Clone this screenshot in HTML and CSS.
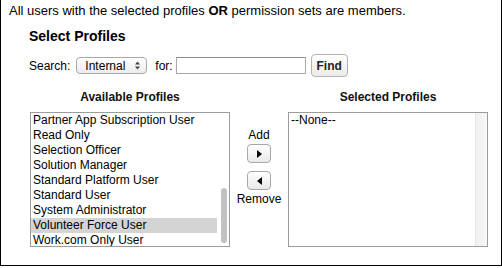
FILE: index.html
```html
<!DOCTYPE html>
<html lang="en">
<head>
    <meta charset="UTF-8">
    <title>Select Profiles</title>
    <link rel="stylesheet" href="styles.css">
</head>
<body>
    <div class="panel">
        <p class="intro">All users with the selected profiles <b>OR</b> permission sets are members.</p>

        <div class="picker">
            <h2 class="picker-title">Select Profiles</h2>

            <div class="search-row">
                <span class="search-label">Search:</span>
                <span class="select">
                    Internal
                    <svg class="select-arrows" width="5" height="9" viewBox="0 0 5 9">
                        <path d="M0 3.5 L2.5 0.5 L5 3.5 Z" fill="#444"/>
                        <path d="M0 5.5 L2.5 8.5 L5 5.5 Z" fill="#444"/>
                    </svg>
                </span>
                <span class="for-label">for:</span>
                <input type="text" class="search-input">
                <button class="find-btn">Find</button>
            </div>

            <div class="duel">
                <div class="duel-col">
                    <div class="duel-label">Available Profiles</div>
                    <div class="listbox">
                        <ul class="options">
                            <li>Partner App Subscription User</li>
                            <li>Read Only</li>
                            <li>Selection Officer</li>
                            <li>Solution Manager</li>
                            <li>Standard Platform User</li>
                            <li>Standard User</li>
                            <li>System Administrator</li>
                            <li class="selected">Volunteer Force User</li>
                            <li>Work.com Only User</li>
                        </ul>
                        <div class="scrollbar">
                            <div class="thumb"></div>
                        </div>
                    </div>
                </div>

                <div class="duel-buttons">
                    <span class="duel-caption">Add</span>
                    <button class="arrow-btn add">
                        <svg width="5" height="8" viewBox="0 0 5 8"><path d="M0 0 L5 4 L0 8 Z" fill="#000"/></svg>
                    </button>
                    <button class="arrow-btn remove">
                        <svg width="5" height="8" viewBox="0 0 5 8"><path d="M5 0 L0 4 L5 8 Z" fill="#000"/></svg>
                    </button>
                    <span class="duel-caption">Remove</span>
                </div>

                <div class="duel-col">
                    <div class="duel-label">Selected Profiles</div>
                    <div class="listbox">
                        <ul class="options">
                            <li>--None--</li>
                        </ul>
                        <div class="scrollbar empty"></div>
                    </div>
                </div>
            </div>
        </div>
    </div>
</body>
</html>
```

FILE: styles.css
```css
* {
    margin: 0;
    padding: 0;
    box-sizing: border-box;
}

body {
    font-family: "Liberation Sans", Arial, Helvetica, sans-serif;
    font-size: 12px;
    color: #000;
    background: #fff;
}

.panel {
    width: 502px;
    height: 266px;
    border: 1px solid #000;
    border-top: none;
}

.intro {
    font-size: 13px;
    line-height: 16px;
    padding: 3px 0 0 8px;
}

.picker {
    padding-left: 28px;
}

.picker-title {
    font-size: 14px;
    line-height: 16px;
    margin-top: 9px;
}

.search-row {
    display: flex;
    align-items: center;
    height: 23px;
    margin-top: 10px;
}

.search-label {
    margin-right: 6px;
}

.select {
    display: flex;
    align-items: center;
    width: 71px;
    height: 17px;
    padding-left: 8px;
    padding-right: 6px;
    border: 1px solid #a8a8a8;
    border-radius: 4px;
    background: linear-gradient(#ffffff, #ececec);
    margin-right: 8px;
}

.select-arrows {
    margin-left: auto;
}

.for-label {
    margin-right: 3px;
}

.search-input {
    width: 130px;
    height: 17px;
    border: 1px solid #a9a9a9;
    border-top-color: #8e8e8e;
    margin-right: 5px;
    font: inherit;
}

.find-btn {
    width: 37px;
    height: 23px;
    border: 1px solid #b3b3b3;
    border-radius: 4px;
    background: linear-gradient(#ffffff, #ebebeb);
    font-family: inherit;
    font-size: 12px;
    font-weight: bold;
    color: #222;
}

.duel {
    display: flex;
    margin-top: 13px;
    margin-left: 1px;
}

.duel-col {
    width: 200px;
}

.duel-label {
    font-weight: bold;
    text-align: center;
    line-height: 14px;
    margin-bottom: 8px;
    color: #111;
}

.listbox {
    display: flex;
    height: 135px;
    border: 1px solid #9c9c9c;
}

.options {
    flex: 1;
    list-style: none;
    overflow: hidden;
}

.options li {
    line-height: 15px;
    padding-left: 2px;
    white-space: nowrap;
}

.options li.selected {
    background: #d4d4d4;
}

.scrollbar {
    width: 12px;
    padding: 75px 0 0 4px;
}

.thumb {
    width: 6px;
    height: 55px;
    border-radius: 3px;
    background: #c2c2c2;
}

.scrollbar.empty {
    border-left: 1px solid #e6e6e6;
    background: linear-gradient(to right, #f0f0f0, #f8f8f8);
}

.duel-buttons {
    width: 58px;
    display: flex;
    flex-direction: column;
    align-items: center;
    padding-top: 38px;
}

.duel-caption {
    line-height: 14px;
}

.arrow-btn {
    display: flex;
    align-items: center;
    justify-content: center;
    width: 24px;
    height: 19px;
    border: 1px solid #a8a8a8;
    border-radius: 4px;
    background: linear-gradient(#ffffff, #e9e9e9);
}

.arrow-btn.add {
    margin-top: 2px;
}

.arrow-btn.remove {
    margin-top: 8px;
    margin-bottom: 2px;
}
```
